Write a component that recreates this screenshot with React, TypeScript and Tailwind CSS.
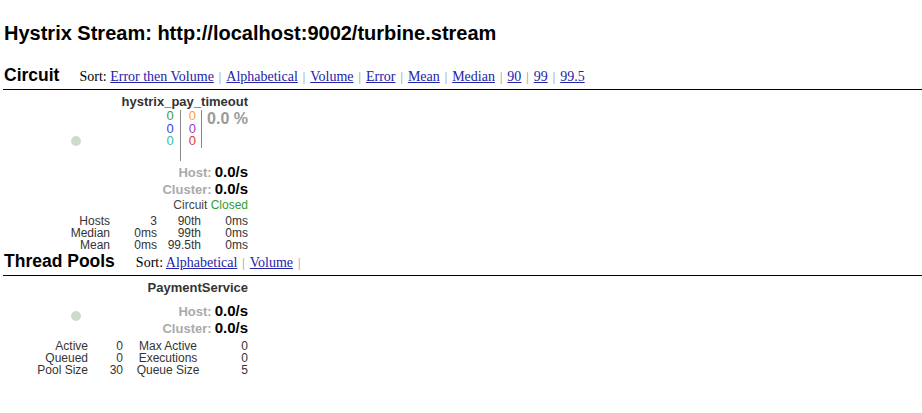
import React from 'react';

const circuitSorts = ['Error then Volume', 'Alphabetical', 'Volume', 'Error', 'Mean', 'Median', '90', '99', '99.5'];
const poolSorts = ['Alphabetical', 'Volume'];

function SortLinks({ items, trailing }: { items: string[]; trailing?: boolean }) {
  return (
    <span className="font-['Liberation_Serif',serif] text-[14px] text-black">
      Sort:{' '}
      {items.map((s, i) => (
        <span key={s}>
          <a href="#" className="text-[#2323a8] underline">
            {s}
          </a>
          {(i < items.length - 1 || trailing) && <span className="mx-[5px] text-[12px] text-[#888]">|</span>}
        </span>
      ))}
    </span>
  );
}

function Dot({ top }: { top: string }) {
  return <div className={`absolute left-[68px] ${top} h-[10px] w-[10px] rounded-full bg-[#ccdccc]`} />;
}

function Rate({ label }: { label: string }) {
  return (
    <div className="flex h-[17px] items-baseline justify-end leading-[17px]">
      <span className="text-[13px] font-bold text-[#aaa]">{label}:</span>
      <span className="ml-[3px] text-[15px] font-bold text-black">0.0/s</span>
    </div>
  );
}

function CircuitMonitor() {
  const stats = [
    ['Hosts', '3', '90th', '0ms'],
    ['Median', '0ms', '99th', '0ms'],
    ['Mean', '0ms', '99.5th', '0ms'],
  ];
  return (
    <div className="relative ml-[3px] w-[245px] pt-[5px]">
      <Dot top="top-[46px]" />
      <div className="text-right text-[13px] font-bold leading-[14px] text-[#333]">hystrix_pay_timeout</div>
      <div className="flex h-[54px] justify-end pt-[1px] text-[13px] leading-[12.5px]">
        <div className="flex flex-col items-end pr-[6px]">
          <span className="text-[#3e9a3e]">0</span>
          <span className="text-[#3c3cf0]">0</span>
          <span className="text-[#2fc4a0]">0</span>
        </div>
        <div className="h-[51px] w-px bg-[#888]" />
        <div className="flex flex-col items-end pl-[8px] pr-[5px]">
          <span className="text-[#ffa033]">0</span>
          <span className="text-[#9a3cc0]">0</span>
          <span className="text-[#e03838]">0</span>
        </div>
        <div className="h-[38px] w-px bg-[#888]" />
        <div className="pl-[5px] text-[16px] font-bold leading-[18px] text-[#999]">0.0 %</div>
      </div>
      <Rate label="Host" />
      <Rate label="Cluster" />
      <div className="text-right text-[12px] leading-[17px] text-[#444]">
        Circuit <span className="text-[#2e9e2e]">Closed</span>
      </div>
      <div className="mt-[1px] grid grid-cols-[107px_47px_44px_47px] text-[12px] leading-[12px] text-[#333]">
        {stats.map((r) =>
          r.map((c, i) => (
            <span key={r[0] + i} className="text-right">
              {c}
            </span>
          )),
        )}
      </div>
    </div>
  );
}

function PoolMonitor() {
  const stats = [
    ['Active', '0', 'Max Active', '0'],
    ['Queued', '0', 'Executions', '0'],
    ['Pool Size', '30', 'Queue Size', '5'],
  ];
  return (
    <div className="relative ml-[3px] w-[245px] pt-[5px]">
      <Dot top="top-[35px]" />
      <div className="mb-[7px] text-right text-[13px] font-bold leading-[14px] text-[#333]">PaymentService</div>
      <Rate label="Host" />
      <Rate label="Cluster" />
      <div className="mt-[4px] grid grid-cols-[85px_35px_90px_35px] text-[12px] leading-[12px] text-[#333]">
        {stats.map((r) =>
          r.map((c, i) => (
            <span key={r[0] + i} className={i === 2 ? 'whitespace-nowrap text-center' : 'text-right'}>
              {c}
            </span>
          )),
        )}
      </div>
    </div>
  );
}

export default function App() {
  return (
    <div className="h-[413px] w-[922px] bg-white font-['Liberation_Sans',Arial,sans-serif] text-black">
      <h1 className="pl-[4px] pt-[22px] text-[20px] font-bold leading-[22px]">
        Hystrix Stream: http://localhost:9002/turbine.stream
      </h1>
      <div className="mt-[20px] flex items-baseline pl-[4px]">
        <h2 className="text-[17.5px] font-bold leading-[22px]">Circuit</h2>
        <div className="ml-[20px]">
          <SortLinks items={circuitSorts} />
        </div>
      </div>
      <div className="ml-[3px] mt-[1px] h-px bg-black" />
      <CircuitMonitor />
      <div className="-mt-[1px] flex items-baseline pl-[4px]">
        <h2 className="text-[17.5px] font-bold leading-[20px]">Thread Pools</h2>
        <div className="ml-[21px]">
          <SortLinks items={poolSorts} trailing />
        </div>
      </div>
      <div className="ml-[3px] mt-[1px] h-px bg-black" />
      <PoolMonitor />
    </div>
  );
}
